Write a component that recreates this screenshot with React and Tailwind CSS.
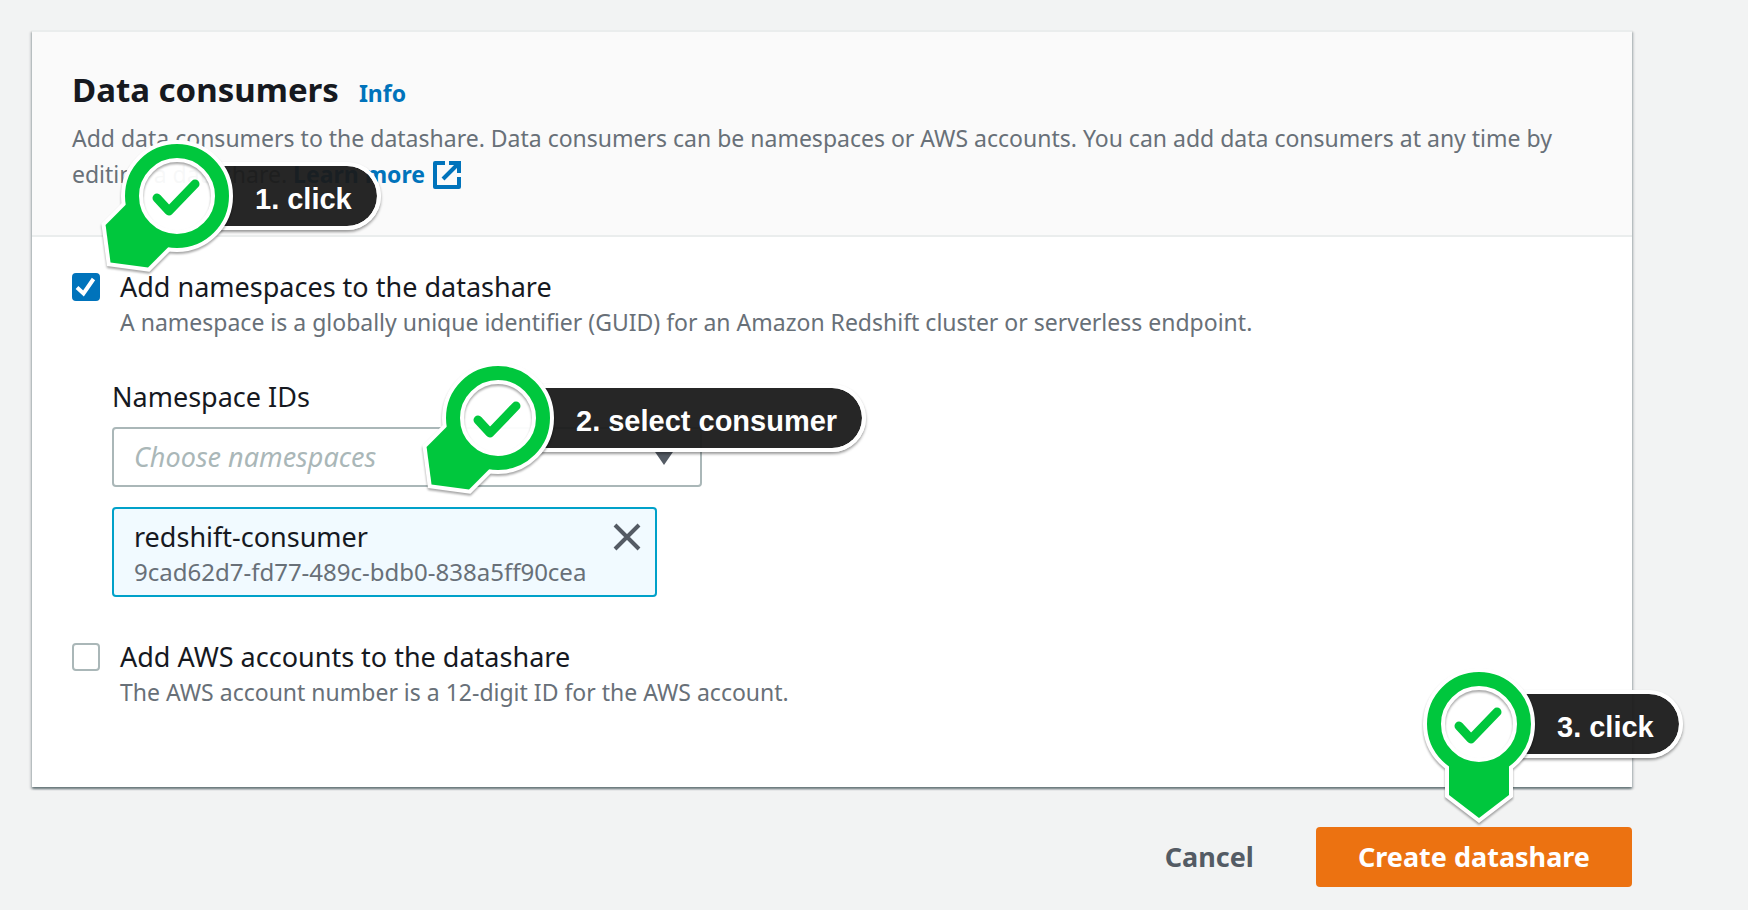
function StepMarker({ label, rotated = false, className }) {
  return (
    <div className={`pointer-events-none absolute z-10 size-0 ${className}`}>
      <div className="absolute left-[38px] -top-[34px] flex h-[68px] items-center rounded-r-full border-4 border-l-0 border-white bg-[#1a1a1a]/95 bg-clip-padding pt-[6px] pr-[25px] pl-10 font-['Liberation_Sans',Arial,sans-serif] text-[29px] leading-none font-bold whitespace-nowrap text-white shadow-[0_2px_3px_rgba(0,0,0,0.4)]">
        {label}
      </div>
      <svg
        viewBox="-80 -64 160 176"
        className="absolute -top-16 -left-20 h-44 w-40 max-w-none"
        aria-hidden="true"
      >
        <circle r="35" fill="#fff" fillOpacity="0.95" />
        <g className="drop-shadow-[0_2px_1px_rgba(0,0,0,0.35)]">
          <g transform={rotated ? 'rotate(45)' : undefined}>
            <circle r="45" fill="none" stroke="#fff" strokeWidth="22" />
            <path d="M-30 40V71L0 94L30 71V40Z" fill="#fff" stroke="#fff" strokeWidth="8" />
            <circle r="45" fill="none" stroke="#00c73d" strokeWidth="14" />
            <path d="M-30 40V71L0 94L30 71V40Z" fill="#00c73d" />
          </g>
        </g>
        <path
          d="M-20 2L-8 15L18 -12"
          fill="none"
          stroke="#00c73d"
          strokeWidth="9"
          strokeLinecap="round"
          strokeLinejoin="round"
        />
      </svg>
    </div>
  )
}

function CheckOption({ id, title, hint, defaultChecked = false }) {
  return (
    <div className="flex gap-5">
      <span className="relative mt-1 size-7 shrink-0">
        <input
          id={id}
          type="checkbox"
          defaultChecked={defaultChecked}
          aria-describedby={`${id}-hint`}
          className="peer block size-7 appearance-none rounded-[4px] border-2 border-[#aab7b8] bg-white checked:border-[#0073bb] checked:bg-[#0073bb]"
        />
        <svg
          viewBox="0 0 28 28"
          className="pointer-events-none absolute inset-0 hidden size-7 peer-checked:block"
          aria-hidden="true"
        >
          <path d="M5 14.5L11.5 20.5L21.5 6" fill="none" stroke="#fff" strokeWidth="4" />
        </svg>
      </span>
      <div>
        <label htmlFor={id} className="block text-[27px] leading-9 text-[#16191f]">
          {title}
        </label>
        <p id={`${id}-hint`} className="text-[23px] leading-[34px] text-[#687078]">
          {hint}
        </p>
      </div>
    </div>
  )
}

export default function App() {
  return (
    <main className="min-h-screen bg-[#f2f3f3] pt-[30px] pr-[116px] pb-6 pl-8 font-['Noto_Sans',sans-serif]">
      <section className="border-t-2 border-[#eaeded] bg-white shadow-[0_2px_2px_0_rgba(0,28,36,0.45),2px_2px_2px_0_rgba(0,28,36,0.12),-2px_2px_2px_0_rgba(0,28,36,0.12)]">
        <header className="border-b-2 border-[#eaeded] bg-[#fafafa] px-10 pt-9 pb-[43px]">
          <div className="flex items-baseline gap-5">
            <h2 className="text-[33px] leading-[44px] font-bold text-[#16191f]">Data consumers</h2>
            <a href="#info" className="text-[23px] font-bold text-[#0073bb]">
              Info
            </a>
          </div>
          <p className="mt-2 text-[23px] leading-9 text-[#687078]">
            Add data consumers to the datashare. Data consumers can be namespaces or AWS accounts. You can
            add data consumers at any time by editing a datashare.{' '}
            <a href="#learn-more" className="font-bold whitespace-nowrap text-[#0073bb]">
              Learn more
              <svg
                viewBox="0 0 28 28"
                className="-mt-1 ml-2 inline-block size-7 align-middle"
                fill="none"
                stroke="currentColor"
                strokeWidth="4"
                aria-hidden="true"
              >
                <path d="M12 2H2V26H26V16" strokeLinejoin="round" />
                <path d="M16 2H26V12" />
                <path d="M25 3L10 18" />
              </svg>
            </a>
          </p>
        </header>

        <div className="px-10 pt-8 pb-[78px]">
          <div className="relative">
            <CheckOption
              id="namespaces"
              title="Add namespaces to the datashare"
              hint="A namespace is a globally unique identifier (GUID) for an Amazon Redshift cluster or serverless endpoint."
              defaultChecked
            />
            <StepMarker label="1. click" rotated className="-top-[73px] left-[105px]" />
          </div>

          <div className="mt-10 pl-10">
            <label htmlFor="namespace-ids" className="block text-[27px] leading-9 text-[#16191f]">
              Namespace IDs
            </label>
            <div className="relative mt-3 max-w-[590px]">
              <select
                id="namespace-ids"
                className="block h-15 w-full appearance-none rounded-[4px] border-2 border-[#aab7b8] bg-white pr-14 pl-5 text-[27px] text-[#aab7b8] italic"
              >
                <option>Choose namespaces</option>
              </select>
              <svg
                viewBox="0 0 22 16"
                className="pointer-events-none absolute top-[22px] right-[27px] h-4 w-[22px]"
                aria-hidden="true"
              >
                <path d="M0 0H22L11 16Z" fill="#545b64" />
              </svg>
              <StepMarker label="2. select consumer" rotated className="-top-[9px] left-[386px]" />
            </div>

            <div className="mt-5 flex max-w-[545px] items-start justify-between rounded-[4px] border-2 border-[#00a1c9] bg-[#f1faff] pt-[10px] pr-3 pb-[6px] pl-5">
              <div>
                <p className="text-[27px] leading-9 text-[#16191f]">redshift-consumer</p>
                <p className="text-2xl leading-[34px] text-[#687078]">
                  9cad62d7-fd77-489c-bdb0-838a5ff90cea
                </p>
              </div>
              <button type="button" aria-label="Remove redshift-consumer" className="mt-0.5 text-[#545b64]">
                <svg
                  viewBox="0 0 32 32"
                  className="block size-8"
                  fill="none"
                  stroke="currentColor"
                  strokeWidth="4"
                  aria-hidden="true"
                >
                  <path d="M4 4L28 28M28 4L4 28" />
                </svg>
              </button>
            </div>
          </div>

          <div className="mt-[42px]">
            <CheckOption
              id="aws-accounts"
              title="Add AWS accounts to the datashare"
              hint="The AWS account number is a 12-digit ID for the AWS account."
            />
          </div>
        </div>
      </section>

      <footer className="mt-10 flex items-center justify-end gap-5">
        <button type="button" className="h-15 px-[42px] text-[27px] font-bold text-[#545b64]">
          Cancel
        </button>
        <div className="relative">
          <button
            type="button"
            className="block h-15 rounded-[4px] bg-[#ec7211] px-[42px] text-[27px] font-bold text-white"
          >
            Create datashare
          </button>
          <StepMarker label="3. click" className="-top-[103px] right-[153px]" />
        </div>
      </footer>
    </main>
  )
}
